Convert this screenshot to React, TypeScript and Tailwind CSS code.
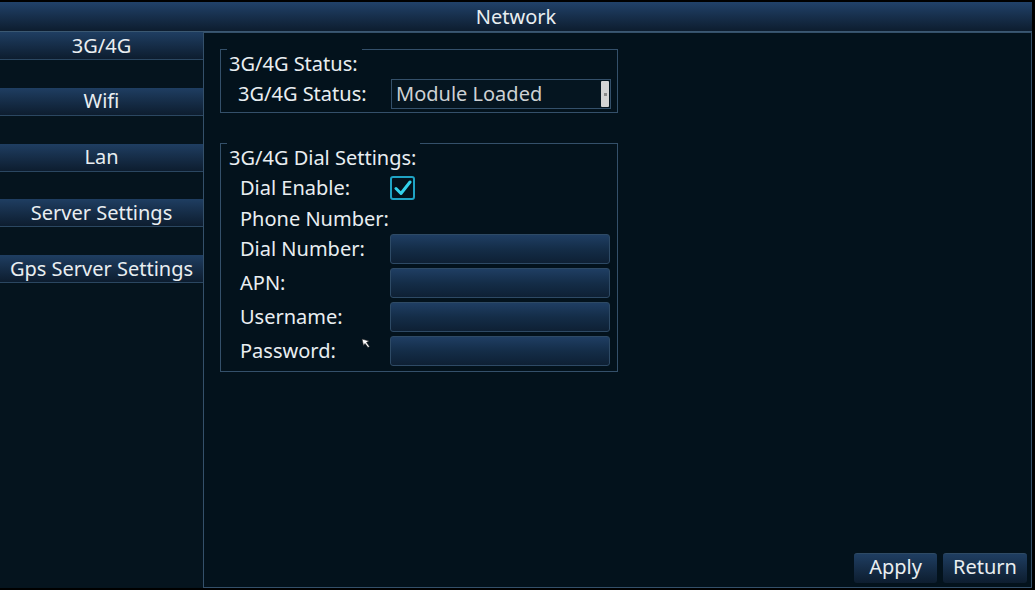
import React from 'react';

const tabs = ['3G/4G', 'Wifi', 'Lan', 'Server Settings', 'Gps Server Settings'];

const Legend: React.FC<{ text: string }> = ({ text }) => (
    <div className="flex items-start h-[29px]">
        <div className="w-[6px] border-t border-[#34506a]" />
        <span className="pl-[2px] pr-[4px] mt-[1px] leading-[28px]">{text}</span>
        <div className="flex-1 border-t border-[#34506a]" />
    </div>
);

const Field: React.FC = () => (
    <div className="w-[220px] h-[30px] rounded-[3px] border border-[#2e4a65] bg-gradient-to-b from-[#1f3e63] via-[#142d48] to-[#0e2034]" />
);

export default function App() {
    return (
        <div className="w-[1035px] h-[590px] bg-black text-[20px] text-[#e9eef1] font-['Noto_Sans',sans-serif]">
            <div className="w-[1032px] h-[588px] flex flex-col">
                {/* Header */}
                <div className="h-[32px] pt-[2px] bg-black">
                    <div className="h-[30px] flex items-center justify-center border-b border-[#3b5872] bg-gradient-to-b from-[#21426a] to-[#0d1d2f] leading-none">
                        Network
                    </div>
                </div>

                <div className="flex flex-1 min-h-0">
                    {/* Sidebar */}
                    <div className="w-[203px] bg-[#05141e] flex flex-col gap-[27.75px]">
                        {tabs.map(t => (
                            <div
                                key={t}
                                className="h-[28px] flex items-center justify-center border-b border-[#2b4761] bg-gradient-to-b from-[#1f3e62] to-[#0d1d2f] leading-none"
                            >
                                {t}
                            </div>
                        ))}
                    </div>

                    {/* Main panel */}
                    <div className="flex-1 border border-[#34506a] bg-[#03121c] flex flex-col pl-[16px] pt-[16px] pr-[4px] pb-[4px]">
                        {/* Status group */}
                        <div className="w-[398px] border-l border-r border-b border-[#34506a] pb-[3px]">
                            <Legend text="3G/4G Status:" />
                            <div className="flex items-center mt-[1px] pl-[17px]">
                                <span className="w-[153px]">3G/4G Status:</span>
                                <div className="w-[220px] h-[30px] border border-[#34506a] bg-[#051520] flex items-center justify-between pl-[4px] pr-[1px]">
                                    <span className="text-[#cdd1d4]">Module Loaded</span>
                                    <div className="shrink-0 w-[8px] h-[26px] bg-[#d4d4d4] rounded-[1px] flex items-center justify-center">
                                        <div className="w-[3px] h-[3px] bg-[#8a8a8a]" />
                                    </div>
                                </div>
                            </div>
                        </div>

                        {/* Dial settings group */}
                        <div className="relative w-[398px] mt-[30px] border-l border-r border-b border-[#34506a] pb-[5px]">
                            <Legend text="3G/4G Dial Settings:" />
                            <div className="flex flex-col pl-[19px]">
                                <div className="flex items-center h-[31px]">
                                    <span className="w-[150px]">Dial Enable:</span>
                                    <div className="w-[25px] h-[24px] border-2 border-[#1fa3c4] rounded-[3px] flex items-center justify-center">
                                        <svg width="18" height="16" viewBox="0 0 18 16">
                                            <path d="M2 8.5 L7 13.5 L16 2" fill="none" stroke="#33d2ec" strokeWidth="3" strokeLinecap="round" strokeLinejoin="round" />
                                        </svg>
                                    </div>
                                </div>
                                <div className="flex items-center h-[31px]">
                                    <span className="w-[150px]">Phone Number:</span>
                                </div>
                                <div className="flex flex-col gap-[4px]">
                                    {['Dial Number:', 'APN:', 'Username:', 'Password:'].map(l => (
                                        <div key={l} className="flex items-center h-[30px]">
                                            <span className="w-[150px]">{l}</span>
                                            <Field />
                                        </div>
                                    ))}
                                </div>
                            </div>
                            {/* mouse pointer */}
                            <svg className="absolute left-[140px] top-[195px]" width="10" height="11" viewBox="0 0 10 11">
                                <path d="M1 1 L8 3 L5.5 4.5 L8.5 8.5 L7 9.5 L4 5.5 L2.5 7.5 Z" fill="#ffffff" stroke="#222" strokeWidth="0.6" />
                            </svg>
                        </div>

                        {/* Actions */}
                        <div className="mt-auto flex justify-end gap-[6px]">
                            <button className="w-[83px] h-[30px] rounded-[3px] border-t border-[#2e4a65] bg-gradient-to-b from-[#1f3e62] to-[#0d1d2f] leading-none pb-[3px]">
                                Apply
                            </button>
                            <button className="w-[84px] h-[30px] rounded-[3px] border-t border-[#2e4a65] bg-gradient-to-b from-[#1f3e62] to-[#0d1d2f] leading-none pb-[3px]">
                                Return
                            </button>
                        </div>
                    </div>
                </div>
            </div>
        </div>
    );
}
